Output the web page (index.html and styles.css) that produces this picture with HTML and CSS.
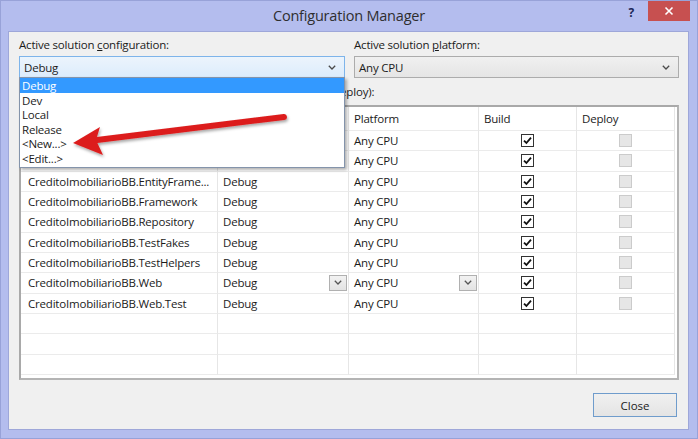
FILE: index.html
```html
<!DOCTYPE html>
<html>
<head>
<meta charset="utf-8">
<title>Configuration Manager</title>
<link rel="stylesheet" href="styles.css">
</head>
<body>
<div class="window">
  <div class="titlebar">
    <div class="title">Configuration Manager</div>
    <div class="tb-buttons">
      <span class="help">?</span>
      <span class="close-x">
        <svg width="10" height="10" viewBox="0 0 10 10"><path d="M1.5 1.5 L8.5 8.5 M8.5 1.5 L1.5 8.5" stroke="#fff" stroke-width="1.6" fill="none"/></svg>
      </span>
    </div>
  </div>

  <div class="client">
    <div class="top-row">
      <div class="field field-config">
        <div class="label">Active solution <u>c</u>onfiguration:</div>
        <div class="combo combo-active">
          <span>Debug</span>
          <svg class="chev" width="8" height="5" viewBox="0 0 8 5"><path d="M0.8 0.8 L4 4 L7.2 0.8" stroke="#4a4a4a" stroke-width="1.3" fill="none"/></svg>
        </div>
        <ul class="dropdown">
          <li class="selected">Debug</li>
          <li>Dev</li>
          <li>Local</li>
          <li>Release</li>
          <li>&lt;New...&gt;</li>
          <li>&lt;Edit...&gt;</li>
        </ul>
      </div>
      <div class="field">
        <div class="label">Active solution <u>p</u>latform:</div>
        <div class="combo">
          <span>Any CPU</span>
          <svg class="chev" width="8" height="5" viewBox="0 0 8 5"><path d="M0.8 0.8 L4 4 L7.2 0.8" stroke="#4a4a4a" stroke-width="1.3" fill="none"/></svg>
        </div>
      </div>
    </div>

    <div class="label contexts">Project c<u>o</u>ntexts (check the project configurations to build or deploy):</div>

    <div class="grid">
      <div class="row head">
        <div class="cell proj">Project</div>
        <div class="cell">Configuration</div>
        <div class="cell">Platform</div>
        <div class="cell">Build</div>
        <div class="cell">Deploy</div>
      </div>
      <div class="row">
        <div class="cell proj">CreditoImobiliarioBB.Domain</div>
        <div class="cell">Debug</div>
        <div class="cell">Any CPU</div>
        <div class="cell center"><span class="chk on"><svg width="11" height="11" viewBox="0 0 11 11"><path d="M2 5.6 L4.4 8 L9 2.6" stroke="#111" stroke-width="1.8" fill="none"/></svg></span></div>
        <div class="cell center"><span class="chk off"></span></div>
      </div>
      <div class="row">
        <div class="cell proj">CreditoImobiliarioBB.Dependency</div>
        <div class="cell">Debug</div>
        <div class="cell">Any CPU</div>
        <div class="cell center"><span class="chk on"><svg width="11" height="11" viewBox="0 0 11 11"><path d="M2 5.6 L4.4 8 L9 2.6" stroke="#111" stroke-width="1.8" fill="none"/></svg></span></div>
        <div class="cell center"><span class="chk off"></span></div>
      </div>
      <div class="row">
        <div class="cell proj">CreditoImobiliarioBB.EntityFrame...</div>
        <div class="cell">Debug</div>
        <div class="cell">Any CPU</div>
        <div class="cell center"><span class="chk on"><svg width="11" height="11" viewBox="0 0 11 11"><path d="M2 5.6 L4.4 8 L9 2.6" stroke="#111" stroke-width="1.8" fill="none"/></svg></span></div>
        <div class="cell center"><span class="chk off"></span></div>
      </div>
      <div class="row">
        <div class="cell proj">CreditoImobiliarioBB.Framework</div>
        <div class="cell">Debug</div>
        <div class="cell">Any CPU</div>
        <div class="cell center"><span class="chk on"><svg width="11" height="11" viewBox="0 0 11 11"><path d="M2 5.6 L4.4 8 L9 2.6" stroke="#111" stroke-width="1.8" fill="none"/></svg></span></div>
        <div class="cell center"><span class="chk off"></span></div>
      </div>
      <div class="row">
        <div class="cell proj">CreditoImobiliarioBB.Repository</div>
        <div class="cell">Debug</div>
        <div class="cell">Any CPU</div>
        <div class="cell center"><span class="chk on"><svg width="11" height="11" viewBox="0 0 11 11"><path d="M2 5.6 L4.4 8 L9 2.6" stroke="#111" stroke-width="1.8" fill="none"/></svg></span></div>
        <div class="cell center"><span class="chk off"></span></div>
      </div>
      <div class="row">
        <div class="cell proj">CreditoImobiliarioBB.TestFakes</div>
        <div class="cell">Debug</div>
        <div class="cell">Any CPU</div>
        <div class="cell center"><span class="chk on"><svg width="11" height="11" viewBox="0 0 11 11"><path d="M2 5.6 L4.4 8 L9 2.6" stroke="#111" stroke-width="1.8" fill="none"/></svg></span></div>
        <div class="cell center"><span class="chk off"></span></div>
      </div>
      <div class="row">
        <div class="cell proj">CreditoImobiliarioBB.TestHelpers</div>
        <div class="cell">Debug</div>
        <div class="cell">Any CPU</div>
        <div class="cell center"><span class="chk on"><svg width="11" height="11" viewBox="0 0 11 11"><path d="M2 5.6 L4.4 8 L9 2.6" stroke="#111" stroke-width="1.8" fill="none"/></svg></span></div>
        <div class="cell center"><span class="chk off"></span></div>
      </div>
      <div class="row">
        <div class="cell proj">CreditoImobiliarioBB.Web</div>
        <div class="cell with-btn">Debug<span class="cell-btn"><svg width="8" height="5" viewBox="0 0 8 5"><path d="M0.8 0.8 L4 4 L7.2 0.8" stroke="#555" stroke-width="1.3" fill="none"/></svg></span></div>
        <div class="cell with-btn">Any CPU<span class="cell-btn"><svg width="8" height="5" viewBox="0 0 8 5"><path d="M0.8 0.8 L4 4 L7.2 0.8" stroke="#555" stroke-width="1.3" fill="none"/></svg></span></div>
        <div class="cell center"><span class="chk on"><svg width="11" height="11" viewBox="0 0 11 11"><path d="M2 5.6 L4.4 8 L9 2.6" stroke="#111" stroke-width="1.8" fill="none"/></svg></span></div>
        <div class="cell center"><span class="chk off"></span></div>
      </div>
      <div class="row">
        <div class="cell proj">CreditoImobiliarioBB.Web.Test</div>
        <div class="cell">Debug</div>
        <div class="cell">Any CPU</div>
        <div class="cell center"><span class="chk on"><svg width="11" height="11" viewBox="0 0 11 11"><path d="M2 5.6 L4.4 8 L9 2.6" stroke="#111" stroke-width="1.8" fill="none"/></svg></span></div>
        <div class="cell center"><span class="chk off"></span></div>
      </div>
      <div class="row"><div class="cell proj"></div><div class="cell"></div><div class="cell"></div><div class="cell"></div><div class="cell"></div></div>
      <div class="row"><div class="cell proj"></div><div class="cell"></div><div class="cell"></div><div class="cell"></div><div class="cell"></div></div>
      <div class="row"><div class="cell proj"></div><div class="cell"></div><div class="cell"></div><div class="cell"></div><div class="cell"></div></div>
    </div>

    <div class="footer">
      <button class="btn">Close</button>
    </div>
  </div>

  <svg class="arrow" width="230" height="60" viewBox="0 0 230 60">
    <defs>
      <filter id="sh" x="-10%" y="-30%" width="120%" height="180%">
        <feDropShadow dx="1" dy="2" stdDeviation="1.4" flood-color="#000" flood-opacity="0.35"/>
      </filter>
    </defs>
    <g filter="url(#sh)">
      <path d="M214 7 L27 30" stroke="#dc1e1e" stroke-width="6" stroke-linecap="round" fill="none"/>
      <path d="M3 33 L30 17 L26 30 L33 45 Z" fill="#dc1e1e"/>
    </g>
  </svg>
</div>
</body>
</html>
```

FILE: styles.css
```css
* { box-sizing: border-box; }

body {
  margin: 0;
  width: 698px;
  height: 439px;
  overflow: hidden;
  font-family: "Segoe UI", "Open Sans", sans-serif;
  font-size: 11.5px;
  letter-spacing: -0.2px;
  color: #1b1b1b;
}

.window {
  position: relative;
  width: 698px;
  height: 439px;
  background: #b4bdee;
  border: 1px solid #98a2d8;
  display: flex;
  flex-direction: column;
}

.titlebar {
  height: 30px;
  display: grid;
  grid-template-columns: 1fr auto 1fr;
  align-items: start;
}

.title {
  grid-column: 2;
  font-size: 14.5px;
  letter-spacing: -0.2px;
  line-height: 30px;
  color: #2e2e2e;
}

.tb-buttons {
  grid-column: 3;
  justify-self: end;
  display: flex;
  align-items: flex-start;
  margin-right: 7px;
}

.help {
  font-weight: bold;
  font-size: 12px;
  color: #1c2858;
  margin: 3px 14px 0 0;
}

.close-x {
  width: 42px;
  height: 20px;
  background: #c75050;
  display: flex;
  align-items: center;
  justify-content: center;
}

.client {
  height: 399px;
  margin: 0 8px 0 7px;
  background: #f0f0f0;
  border: 1px solid #9ea7d9;
  padding: 5px 9px 0 10px;
  display: flex;
  flex-direction: column;
}

.label {
  line-height: 15px;
  height: 15px;
  white-space: nowrap;
}

.top-row {
  display: grid;
  grid-template-columns: 326px 325px;
  column-gap: 9px;
}

.field { position: relative; }

.combo {
  margin-top: 4px;
  height: 22px;
  border: 1px solid #acacac;
  background: linear-gradient(#f0f0f0, #e5e5e5);
  display: flex;
  align-items: center;
  justify-content: space-between;
  padding: 0 8px 0 4px;
}

.combo-active {
  border-color: #7eb4ea;
  background: linear-gradient(#ecf4fc, #dcecfc);
}

.dropdown {
  position: absolute;
  left: 0;
  right: 0;
  top: 40px;
  height: 91px;
  margin: 0;
  padding: 0 0 2px;
  list-style: none;
  background: #fff;
  border: 1px solid #8494ab;
  box-shadow: 2px 2px 3px rgba(0, 0, 0, 0.3);
  z-index: 5;
}

.dropdown li {
  height: 14.5px;
  line-height: 16px;
  padding-left: 2px;
}

.dropdown li.selected {
  background: #3399ff;
  color: #fff;
}

.contexts {
  margin-top: 6px;
  padding-left: 1px;
}

.grid {
  margin-top: 6px;
  height: 275px;
  border: 2px solid #a9a9a9;
  border-right-color: #b4b4b4;
  border-bottom-color: #b4b4b4;
  background: #fff;
}

.row {
  display: grid;
  grid-template-columns: 197px 131px 130px 98px 98px;
  height: 20.33px;
}

.row.head { height: 24px; }

.cell {
  border-right: 1px solid #e6e6e6;
  border-bottom: 1px solid #ebebeb;
  padding-left: 5px;
  display: flex;
  align-items: center;
  white-space: nowrap;
  overflow: hidden;
}

.cell.proj { padding-left: 7px; }

.cell.center {
  justify-content: center;
  padding-left: 0;
}

.cell.with-btn {
  justify-content: space-between;
  padding-right: 1px;
}

.cell-btn {
  width: 18px;
  height: 16px;
  border: 1px solid #b0b0b0;
  background: linear-gradient(#f2f2f2, #e3e3e3);
  display: flex;
  align-items: center;
  justify-content: center;
}

.chk {
  width: 13px;
  height: 13px;
  display: flex;
  align-items: center;
  justify-content: center;
}

.chk.on {
  border: 1px solid #333;
  background: #fff;
}

.chk.off {
  border: 1px solid #cbcbcb;
  background: #e6e6e6;
}

.footer {
  display: flex;
  justify-content: flex-end;
  margin-top: 13px;
  padding-right: 2px;
}

.btn {
  width: 84px;
  height: 24px;
  border: 1px solid #6f9ccc;
  background: linear-gradient(#f0f0f0, #e4e4e4);
  font: inherit;
  color: #1b1b1b;
  padding: 0;
}

.arrow {
  position: absolute;
  left: 69px;
  top: 109px;
  z-index: 10;
  pointer-events: none;
}
```
